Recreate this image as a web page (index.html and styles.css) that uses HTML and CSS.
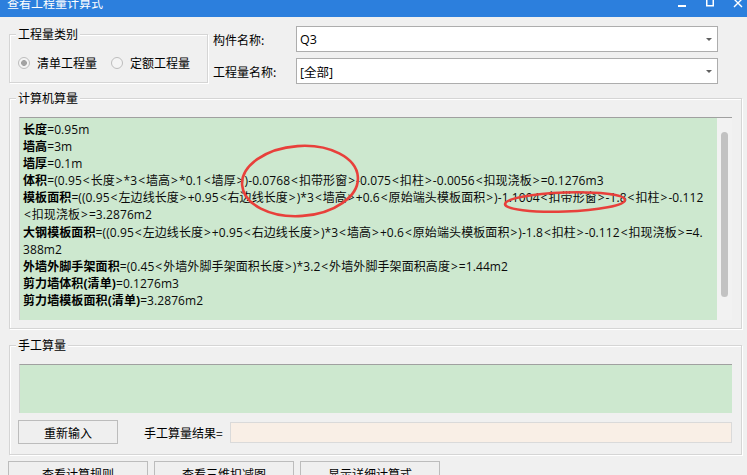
FILE: index.html
```html
<!DOCTYPE html>
<html lang="zh-CN">
<head>
<meta charset="utf-8">
<title>查看工程量计算式</title>
<link rel="stylesheet" href="styles.css">
</head>
<body>
<div class="titlebar">
  <span class="title">查看工程量计算式</span>
  <svg class="winbtns" width="70" height="17" viewBox="0 0 70 17">
    <rect x="1" y="5" width="8" height="2" fill="#fff"/>
    <rect x="29.75" y="-3" width="6.5" height="8.75" fill="none" stroke="#fff" stroke-width="1.5"/>
    <path d="M57 -1 L65 7 M65 -1 L57 7" stroke="#fff" stroke-width="1.4" fill="none"/>
  </svg>
</div>

<div class="top">
  <fieldset class="group kind">
    <legend>工程量类别</legend>
    <div class="radios">
      <span class="radio first"><span class="dot checked"></span>清单工程量</span>
      <span class="radio"><span class="dot"></span>定额工程量</span>
    </div>
  </fieldset>
  <div class="fields">
    <div class="field">
      <span class="flabel">构件名称:</span>
      <div class="combo"><span class="cval">Q3</span><span class="caret"></span></div>
    </div>
    <div class="field">
      <span class="flabel">工程量名称:</span>
      <div class="combo"><span class="cval">[全部]</span><span class="caret"></span></div>
    </div>
  </div>
</div>

<fieldset class="group calc">
  <legend>计算机算量</legend>
  <div class="calcbox">
    <div class="lines">
      <div><b>长度</b>=0.95m</div>
      <div><b>墙高</b>=3m</div>
      <div><b>墙厚</b>=0.1m</div>
      <div><b>体积</b>=(0.95<i>&lt;</i>长度<i>&gt;</i>*3<i>&lt;</i>墙高<i>&gt;</i>*0.1<i>&lt;</i>墙厚<i>&gt;</i>)-0.0768<i>&lt;</i>扣带形窗<i>&gt;</i>-0.075<i>&lt;</i>扣柱<i>&gt;</i>-0.0056<i>&lt;</i>扣现浇板<i>&gt;</i>=0.1276m3</div>
      <div><b>模板面积</b>=((0.95<i>&lt;</i>左边线长度<i>&gt;</i>+0.95<i>&lt;</i>右边线长度<i>&gt;</i>)*3<i>&lt;</i>墙高<i>&gt;</i>+0.6<i>&lt;</i>原始端头模板面积<i>&gt;</i>)-1.1004<i>&lt;</i>扣带形窗<i>&gt;</i>-1.8<i>&lt;</i>扣柱<i>&gt;</i>-0.112</div>
      <div><i>&lt;</i>扣现浇板<i>&gt;</i>=3.2876m2</div>
      <div><b>大钢模板面积</b>=((0.95<i>&lt;</i>左边线长度<i>&gt;</i>+0.95<i>&lt;</i>右边线长度<i>&gt;</i>)*3<i>&lt;</i>墙高<i>&gt;</i>+0.6<i>&lt;</i>原始端头模板面积<i>&gt;</i>)-1.8<i>&lt;</i>扣柱<i>&gt;</i>-0.112<i>&lt;</i>扣现浇板<i>&gt;</i>=4.</div>
      <div>388m2</div>
      <div><b>外墙外脚手架面积</b>=(0.45<i>&lt;</i>外墙外脚手架面积长度<i>&gt;</i>)*3.2<i>&lt;</i>外墙外脚手架面积高度<i>&gt;</i>=1.44m2</div>
      <div><b>剪力墙体积(清单)</b>=0.1276m3</div>
      <div><b>剪力墙模板面积(清单)</b>=3.2876m2</div>
    </div>
    <div class="scrollbar"><div class="thumb"></div></div>
  </div>
</fieldset>

<fieldset class="group manual">
  <legend>手工算量</legend>
  <div class="manualbox"></div>
  <div class="mrow">
    <div class="btn reinput">重新输入</div>
    <span class="rlabel">手工算量结果=</span>
    <div class="result"></div>
  </div>
</fieldset>

<div class="bottom">
  <div class="btn big">查看计算规则</div>
  <div class="btn big">查看三维扣减图</div>
  <div class="btn big">显示详细计算式</div>
</div>

<svg class="marks" width="747" height="475" viewBox="0 0 747 475">
  <ellipse cx="300" cy="181" rx="58" ry="35" transform="rotate(-4 300 181)" fill="none" stroke="#e8403b" stroke-width="2.6"/>
  <ellipse cx="565" cy="202" rx="60" ry="9.5" transform="rotate(-2 565 202)" fill="none" stroke="#e8403b" stroke-width="2.6"/>
</svg>
</body>
</html>
```

FILE: styles.css
```css
* { box-sizing: border-box; }

html, body {
  margin: 0;
  padding: 0;
  width: 747px;
  height: 475px;
  overflow: hidden;
  background: #f0f0f0;
}

body {
  position: relative;
  font-family: "Noto Sans CJK SC", sans-serif;
  font-size: 12px;
  color: #000;
}

.titlebar {
  height: 17px;
  background: #2c7fdd;
  display: flex;
  align-items: flex-start;
  overflow: hidden;
}

.title {
  color: #fff;
  font-size: 12px;
  line-height: 12px;
  margin: -3px 0 0 7px;
}

.winbtns {
  margin-left: auto;
  display: block;
}

.top {
  display: flex;
  align-items: flex-start;
  margin-top: 9px;
  padding-right: 29px;
}

.group {
  margin: 0;
  padding: 0;
  min-width: 0;
  border: 1px solid #d5d5d5;
  box-shadow: inset 1px 1px 0 #fff, 1px 1px 0 #fff;
}

.group legend {
  padding: 0 2px;
  margin-left: 6px;
  line-height: 14px;
  font-size: 12px;
  background: #f0f0f0;
}

.kind {
  width: 199px;
  margin-top: 1px;
  margin-left: 9px;
}

.radios {
  display: flex;
  align-items: center;
  padding: 15px 0 12px 8px;
  line-height: 14px;
}

.radio {
  display: inline-flex;
  align-items: center;
  gap: 7px;
}

.radio.first { margin-right: 14px; }

.dot {
  width: 12px;
  height: 12px;
  border-radius: 50%;
  border: 1px solid #bdbdbd;
  background: #f4f4f4;
}

.dot.checked {
  background: radial-gradient(circle, #a3a3a3 0 2.6px, #f4f4f4 3.2px);
}

.fields {
  flex: 1;
  margin-left: 5px;
  display: flex;
  flex-direction: column;
  gap: 6px;
}

.field {
  display: flex;
  align-items: center;
  height: 26px;
}

.flabel {
  width: 83px;
  flex: none;
}

.combo {
  flex: 1;
  height: 26px;
  border: 1px solid #adadad;
  background: #fff;
  display: flex;
  align-items: center;
  justify-content: space-between;
  padding: 0 5px 0 3px;
}

.cval {
  font-family: "Open Sans", "Noto Sans CJK SC", sans-serif;
  font-size: 12.5px;
}

.caret {
  width: 0;
  height: 0;
  border-left: 3px solid transparent;
  border-right: 3px solid transparent;
  border-top: 3px solid #606060;
}

.calc {
  width: 733px;
  margin: 7px 0 0 9px;
}

.calcbox {
  margin: 12px 9px 8px 9px;
  height: 203px;
  display: flex;
  border-top: 1px solid #a0a0a0;
  border-left: 1px solid #d3d3d3;
}

.lines {
  flex: 1;
  background: #cde8cf;
  padding: 3px 0 0 3px;
  font-family: "Open Sans", "Noto Sans CJK SC", sans-serif;
  font-size: 12px;
  letter-spacing: 0.09px;
  line-height: 17.1px;
  white-space: nowrap;
  overflow: hidden;
  color: #0a0a0a;
}

.lines b { font-weight: 700; color: #000; }

.lines i {
  font-style: normal;
  padding: 0 0.92px;
}

.scrollbar {
  width: 15px;
  flex: none;
  background: #f2f2f2;
  padding: 14px 3px 0 4px;
}

.thumb {
  width: 7px;
  height: 165px;
  border-radius: 4px;
  background: #c2c2c2;
}

.manual {
  width: 733px;
  margin: 9px 0 0 9px;
}

.manualbox {
  margin: 12px 9px 0 9px;
  height: 49px;
  background: #cde8cf;
  border-top: 1px solid #a0a0a0;
  border-left: 1px solid #d3d3d3;
}

.mrow {
  display: flex;
  align-items: center;
  margin: 7px 9px 10px 8px;
}

.btn {
  display: flex;
  align-items: center;
  justify-content: center;
  border: 1px solid #bcbcbc;
  background: #efefef;
  font-size: 12px;
}

.reinput {
  width: 100px;
  height: 24px;
}

.rlabel {
  margin-left: 26px;
  margin-right: 7px;
}

.result {
  flex: 1;
  height: 21px;
  background: #f9efe6;
  border: 1px solid #dadada;
}

.bottom {
  display: flex;
  gap: 6px;
  margin: 6px 0 0 8px;
}

.btn.big {
  width: 140px;
  height: 25px;
}

.marks {
  position: absolute;
  top: 0;
  left: 0;
  pointer-events: none;
}
```
